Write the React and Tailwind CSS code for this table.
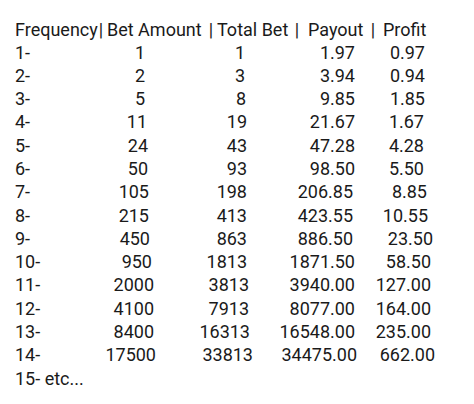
const pad = {
  0: 'pr-0',
  2: 'pr-[2px]',
  3: 'pr-[3px]',
  4: 'pr-[4px]',
  6: 'pr-[6px]',
  7: 'pr-[7px]',
  8: 'pr-[8px]',
  9: 'pr-[9px]',
  10: 'pr-[10px]',
  11: 'pr-[11px]',
};

// [freq, [bet, off], [total, off], [payout, off], [profit, off]]
const rows = [
  ['1-', ['1', 11], ['1', 8], ['1.97', 2], ['0.97', 10]],
  ['2-', ['2', 11], ['3', 8], ['3.94', 2], ['0.94', 10]],
  ['3-', ['5', 11], ['8', 7], ['9.85', 2], ['1.85', 10]],
  ['4-', ['11', 9], ['19', 6], ['21.67', 2], ['1.67', 11]],
  ['5-', ['24', 8], ['43', 6], ['47.28', 2], ['4.28', 11]],
  ['6-', ['50', 8], ['93', 6], ['98.50', 2], ['5.50', 11]],
  ['7-', ['105', 7], ['198', 6], ['206.85', 4], ['8.85', 8]],
  ['8-', ['215', 7], ['413', 6], ['423.55', 4], ['10.55', 7]],
  ['9-', ['450', 6], ['863', 6], ['886.50', 4], ['23.50', 2]],
  ['10-', ['950', 4], ['1813', 6], ['1871.50', 2], ['58.50', 4]],
  ['11-', ['2000', 2], ['3813', 4], ['3940.00', 2], ['127.00', 4]],
  ['12-', ['4100', 2], ['7913', 4], ['8077.00', 2], ['164.00', 4]],
  ['13-', ['8400', 2], ['16313', 3], ['16548.00', 2], ['235.00', 4]],
  ['14-', ['17500', 0], ['33813', 0], ['34475.00', 0], ['662.00', 0]],
];

const Bar = () => <span className="w-[8px] flex justify-center">|</span>;

export default function App() {
  return (
    <div className="w-[474px] h-[404px] bg-white text-[#1a1a1a] pl-[15px] pt-[19px] font-['Roboto',sans-serif] text-[18px] leading-[23.3px] overflow-hidden">
      <div className="flex whitespace-pre leading-[21.5px]">
        <span className="w-[82px]">Frequency</span>
        <Bar />
        <span className="ml-[2px] w-[100px]">Bet Amount</span>
        <Bar />
        <span className="ml-[2px] w-[76px]">Total Bet</span>
        <Bar />
        <span className="ml-[7px] w-[61px]">Payout</span>
        <Bar />
        <span className="ml-[6px]">Profit</span>
      </div>
      <div className="grid grid-cols-[141px_97px_104px_78px]">
        {rows.map(([freq, bet, total, payout, profit]) => (
          <div key={freq} className="contents">
            <div className="flex justify-between">
              <span>{freq}</span>
              <span className={pad[bet[1]]}>{bet[0]}</span>
            </div>
            <div className={`text-right ${pad[total[1]]}`}>{total[0]}</div>
            <div className={`text-right ${pad[payout[1]]}`}>{payout[0]}</div>
            <div className={`text-right ${pad[profit[1]]}`}>{profit[0]}</div>
          </div>
        ))}
      </div>
      <div>15- etc...</div>
    </div>
  );
}
